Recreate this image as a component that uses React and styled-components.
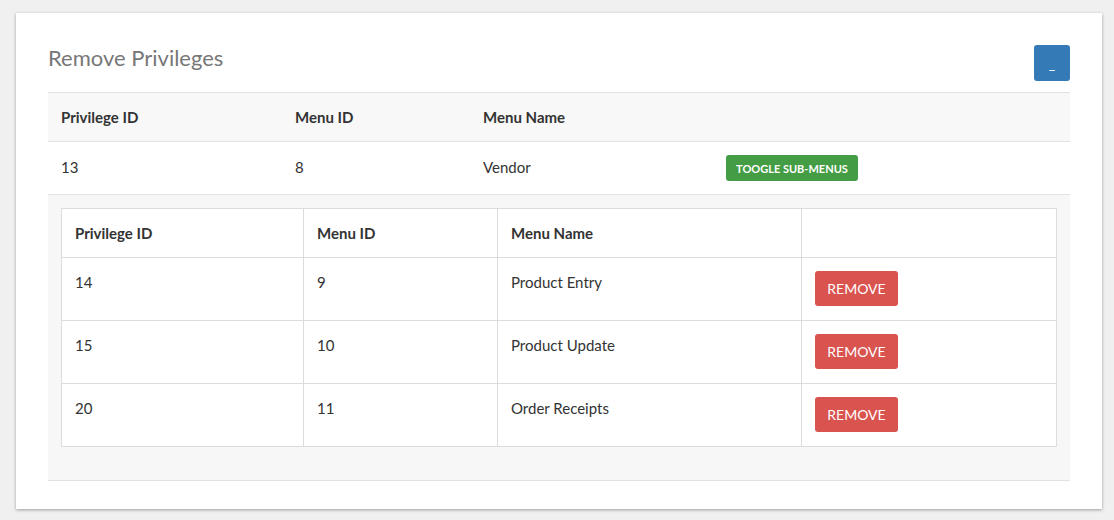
import React from 'react'
import styled, { createGlobalStyle } from 'styled-components'

const Global = createGlobalStyle`
  body {
    margin: 0;
    background: #f0f0f0;
    font-family: Lato, "Noto Sans", sans-serif;
    color: #333;
  }
`

const subMenus = [
  { id: 14, menu: 9, name: 'Product Entry' },
  { id: 15, menu: 10, name: 'Product Update' },
  { id: 20, menu: 11, name: 'Order Receipts' },
]

const App = () => {
  return (
    <Page>
      <Global />
      <Card>
        <Head>
          <Title>Remove Privileges</Title>
          <Collapse>_</Collapse>
        </Head>
        <Table>
          <colgroup>
            <col style={{ width: 234 }} />
            <col style={{ width: 188 }} />
            <col style={{ width: 243 }} />
            <col />
          </colgroup>
          <thead>
            <tr>
              <Th>Privilege ID</Th>
              <Th>Menu ID</Th>
              <Th>Menu Name</Th>
              <Th></Th>
            </tr>
          </thead>
          <tbody>
            <tr>
              <Td>13</Td>
              <Td>8</Td>
              <Td>Vendor</Td>
              <Td>
                <Toggle>Toogle Sub-Menus</Toggle>
              </Td>
            </tr>
            <tr>
              <Nested colSpan={4}>
                <Inner>
                  <colgroup>
                    <col style={{ width: 242 }} />
                    <col style={{ width: 194 }} />
                    <col style={{ width: 304 }} />
                    <col />
                  </colgroup>
                  <thead>
                    <tr>
                      <ITh>Privilege ID</ITh>
                      <ITh>Menu ID</ITh>
                      <ITh>Menu Name</ITh>
                      <ITh></ITh>
                    </tr>
                  </thead>
                  <tbody>
                    {subMenus.map((m) => (
                      <tr key={m.id}>
                        <ITd>{m.id}</ITd>
                        <ITd>{m.menu}</ITd>
                        <ITd>{m.name}</ITd>
                        <ITd>
                          <Remove>Remove</Remove>
                        </ITd>
                      </tr>
                    ))}
                  </tbody>
                </Inner>
              </Nested>
            </tr>
          </tbody>
        </Table>
      </Card>
    </Page>
  )
}

export default App

const Page = styled.div`
  padding: 13px 12px 11px 16px;
`
const Card = styled.div`
  width: 1022px;
  background: #fff;
  padding: 32px 32px 28px 32px;
  box-shadow: 0 1px 3px rgba(0, 0, 0, 0.35);
`
const Head = styled.div`
  display: flex;
  justify-content: space-between;
  align-items: flex-start;
  margin-bottom: 11px;
`
const Title = styled.h3`
  margin: 0;
  font-size: 22px;
  line-height: 26px;
  font-weight: 400;
  color: #777;
`
const Collapse = styled.button`
  width: 36px;
  height: 36px;
  border: none;
  border-radius: 3px;
  background: #337ab7;
  color: #fff;
  font-family: inherit;
  font-size: 14px;
  padding: 0;
`
const Table = styled.table`
  width: 100%;
  border-collapse: collapse;
  table-layout: fixed;
  font-size: 15px;
  border-top: 1px solid #e2e2e2;
`
const Th = styled.th`
  text-align: left;
  font-weight: 700;
  padding: 13px;
  height: 49px;
  box-sizing: border-box;
  line-height: 22px;
  background: #f8f8f8;
  border-bottom: 1px solid #e2e2e2;
`
const Td = styled.td`
  vertical-align: top;
  padding: 13px;
  height: 51px;
  box-sizing: border-box;
  line-height: 24px;
  border-bottom: 1px solid #e2e2e2;
`
const Toggle = styled.button`
  display: block;
  border: none;
  border-radius: 3px;
  background: #449d44;
  color: #fff;
  font-family: inherit;
  font-size: 11px;
  font-weight: 700;
  text-transform: uppercase;
  height: 26px;
  width: 132px;
  padding: 0;
`
const Nested = styled.td`
  background: #f7f7f7;
  padding: 13px 13px 33px 13px;
  border-bottom: 1px solid #e2e2e2;
`
const Inner = styled.table`
  width: 100%;
  border-collapse: collapse;
  table-layout: fixed;
  background: #fff;
  font-size: 15px;
`
const ITh = styled.th`
  text-align: left;
  font-weight: 700;
  padding: 13px;
  height: 49px;
  box-sizing: border-box;
  line-height: 22px;
  border: 1px solid #dcdcdc;
`
const ITd = styled.td`
  vertical-align: top;
  padding: 13px;
  height: 63px;
  box-sizing: border-box;
  line-height: 22px;
  border: 1px solid #dcdcdc;
`
const Remove = styled.button`
  display: block;
  border: none;
  border-radius: 3px;
  background: #d9534f;
  color: #fff;
  font-family: inherit;
  font-size: 14px;
  text-transform: uppercase;
  height: 35px;
  width: 83px;
  padding: 0;
`
